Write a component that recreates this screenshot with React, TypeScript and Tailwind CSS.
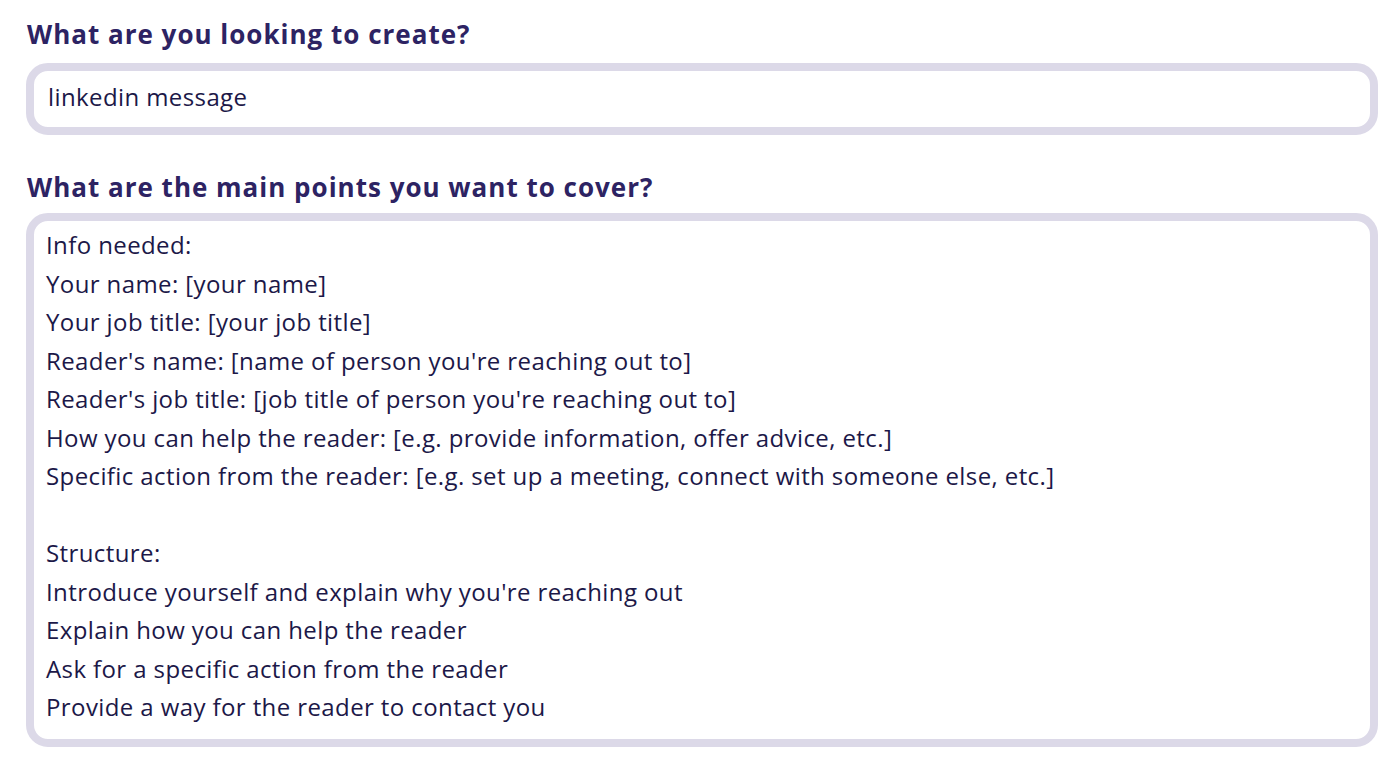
import React from "react";

const lines = [
  "Info needed:",
  "Your name: [your name]",
  "Your job title: [your job title]",
  "Reader's name: [name of person you're reaching out to]",
  "Reader's job title: [job title of person you're reaching out to]",
  "How you can help the reader: [e.g. provide information, offer advice, etc.]",
  "Specific action from the reader: [e.g. set up a meeting, connect with someone else, etc.]",
  "",
  "Structure:",
  "Introduce yourself and explain why you're reaching out",
  "Explain how you can help the reader",
  "Ask for a specific action from the reader",
  "Provide a way for the reader to contact you",
];

export default function App() {
  return (
    <div
      className="w-[1400px] h-[770px] bg-white pl-[26px] pr-[22px] pt-[18px]"
      style={{ fontFamily: "'Open Sans', 'Noto Sans', sans-serif" }}
    >
      <h2 className="text-[26px] leading-[32px] font-bold tracking-[1px] text-[#2d2363] pl-[1px]">
        What are you looking to create?
      </h2>
      <div className="mt-[13px] h-[72px] border-[8px] border-[#dcd9e8] rounded-[22px] flex items-center pl-[14px] pb-[4px] text-[24px] tracking-[0.4px] text-[#1c1848]">
        linkedin message
      </div>
      <h2 className="mt-[36px] text-[26px] leading-[32px] font-bold tracking-[1px] text-[#2d2363] pl-[1px]">
        What are the main points you want to cover?
      </h2>
      <div className="mt-[10px] h-[534px] border-[8px] border-[#dcd9e8] rounded-[22px] pl-[12px] pt-[5px] text-[24px] leading-[38.5px] tracking-[0.4px] text-[#1c1848]">
        {lines.map((l, i) => (
          <div key={i} className="h-[38.5px] whitespace-pre">
            {l}
          </div>
        ))}
      </div>
    </div>
  );
}
